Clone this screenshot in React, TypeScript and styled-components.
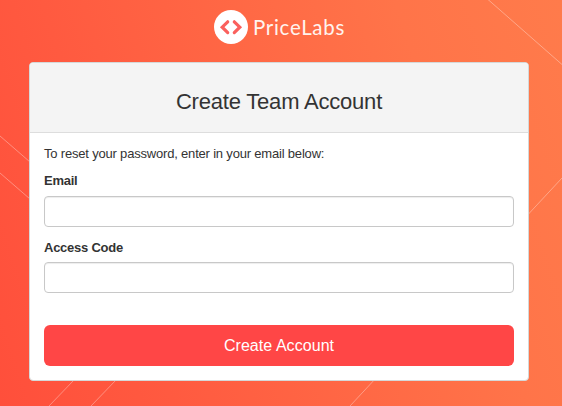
import React from 'react';
import styled, { createGlobalStyle } from 'styled-components';

const GlobalStyle = createGlobalStyle`
  * { box-sizing: border-box; }
  body {
    margin: 0;
    font-family: "Liberation Sans", Arial, sans-serif;
    font-size: 13px;
    color: #333;
  }
`;

const Page = styled.main`
  position: relative;
  display: flex;
  flex-direction: column;
  align-items: center;
  width: 562px;
  height: 406px;
  overflow: hidden;
  background: linear-gradient(72deg, #ff4f3b 0%, #ff5a40 25%, #ff7449 76%, #ff7b4b 100%);
`;

const Backdrop = styled.svg`
  position: absolute;
  inset: 0;
`;

const Brand = styled.header`
  position: relative;
  display: flex;
  align-items: center;
  gap: 5px;
  height: 62px;
  padding: 0 3px 8px 0;
`;

const Wordmark = styled.span`
  width: 92px;
  color: #fff3ee;
  font-family: Lato, sans-serif;
  font-size: 20.5px;
  line-height: 30px;
  letter-spacing: 0.7px;
  white-space: nowrap;
`;

const Card = styled.section`
  position: relative;
  width: 500px;
  height: 319px;
  margin-right: 4px;
  background: #fff;
  border: 1px solid #d5d8d8;
  border-radius: 4px;
  overflow: hidden;
`;

const CardHeader = styled.div`
  display: flex;
  align-items: center;
  justify-content: center;
  height: 70px;
  padding-top: 8px;
  background: #f4f4f4;
  border-bottom: 1px solid #ddd;
`;

const Title = styled.h1`
  margin: 0;
  font-size: 22px;
  font-weight: 400;
  line-height: 24px;
  letter-spacing: -0.2px;
`;

const Form = styled.form`
  display: flex;
  flex-direction: column;
  padding: 12px 14px 14px;
`;

const Intro = styled.p`
  margin: 0 0 9px;
  font-size: 13px;
  line-height: 18px;
  letter-spacing: -0.19px;
`;

const Field = styled.label`
  display: flex;
  flex-direction: column;
  justify-content: space-between;
  height: 55px;
  font-weight: 700;
  line-height: 18px;
  letter-spacing: -0.25px;

  & + & {
    height: 54px;
    margin-top: 12px;
  }
`;

const Input = styled.input`
  height: 31px;
  padding: 6px 12px;
  border: 1px solid #c8c8c8;
  border-radius: 4px;
  background: #fff;
  box-shadow: inset 0 1px 1px rgba(0, 0, 0, 0.075);
  outline: none;
`;

const SubmitButton = styled.button`
  height: 41px;
  margin-top: 32px;
  border: 0;
  border-radius: 6px;
  background: #ff4646;
  color: #fff;
  font-family: inherit;
  font-size: 16px;
  line-height: 20px;
  letter-spacing: 0.06px;
`;

export default function App() {
  return (
    <Page>
      <GlobalStyle />
      <Backdrop width="562" height="406" viewBox="0 0 562 406" aria-hidden="true">
        <path
          d="M488 -0.5L562 64.5M0 136L30 162M0 173L30 199M562 178L350 406M74 380L49 406M116 380L91 406"
          fill="none"
          stroke="#fff"
          strokeOpacity="0.34"
        />
      </Backdrop>
      <Brand>
        <svg width="34" height="34" viewBox="0 0 34 34" aria-hidden="true">
          <circle cx="17" cy="17" r="17" fill="#fff" />
          <path
            d="M13.7 11.8L8.2 17.2L13.7 22.6M20.3 11.8L25.8 17.2L20.3 22.6"
            fill="none"
            stroke="#fa605d"
            strokeWidth="3.2"
            strokeLinecap="round"
          />
        </svg>
        <Wordmark>PriceLabs</Wordmark>
      </Brand>
      <Card>
        <CardHeader>
          <Title>Create Team Account</Title>
        </CardHeader>
        <Form>
          <Intro>To reset your password, enter in your email below:</Intro>
          <Field>
            Email
            <Input type="email" />
          </Field>
          <Field>
            Access Code
            <Input type="text" />
          </Field>
          <SubmitButton type="button">Create Account</SubmitButton>
        </Form>
      </Card>
    </Page>
  );
}
